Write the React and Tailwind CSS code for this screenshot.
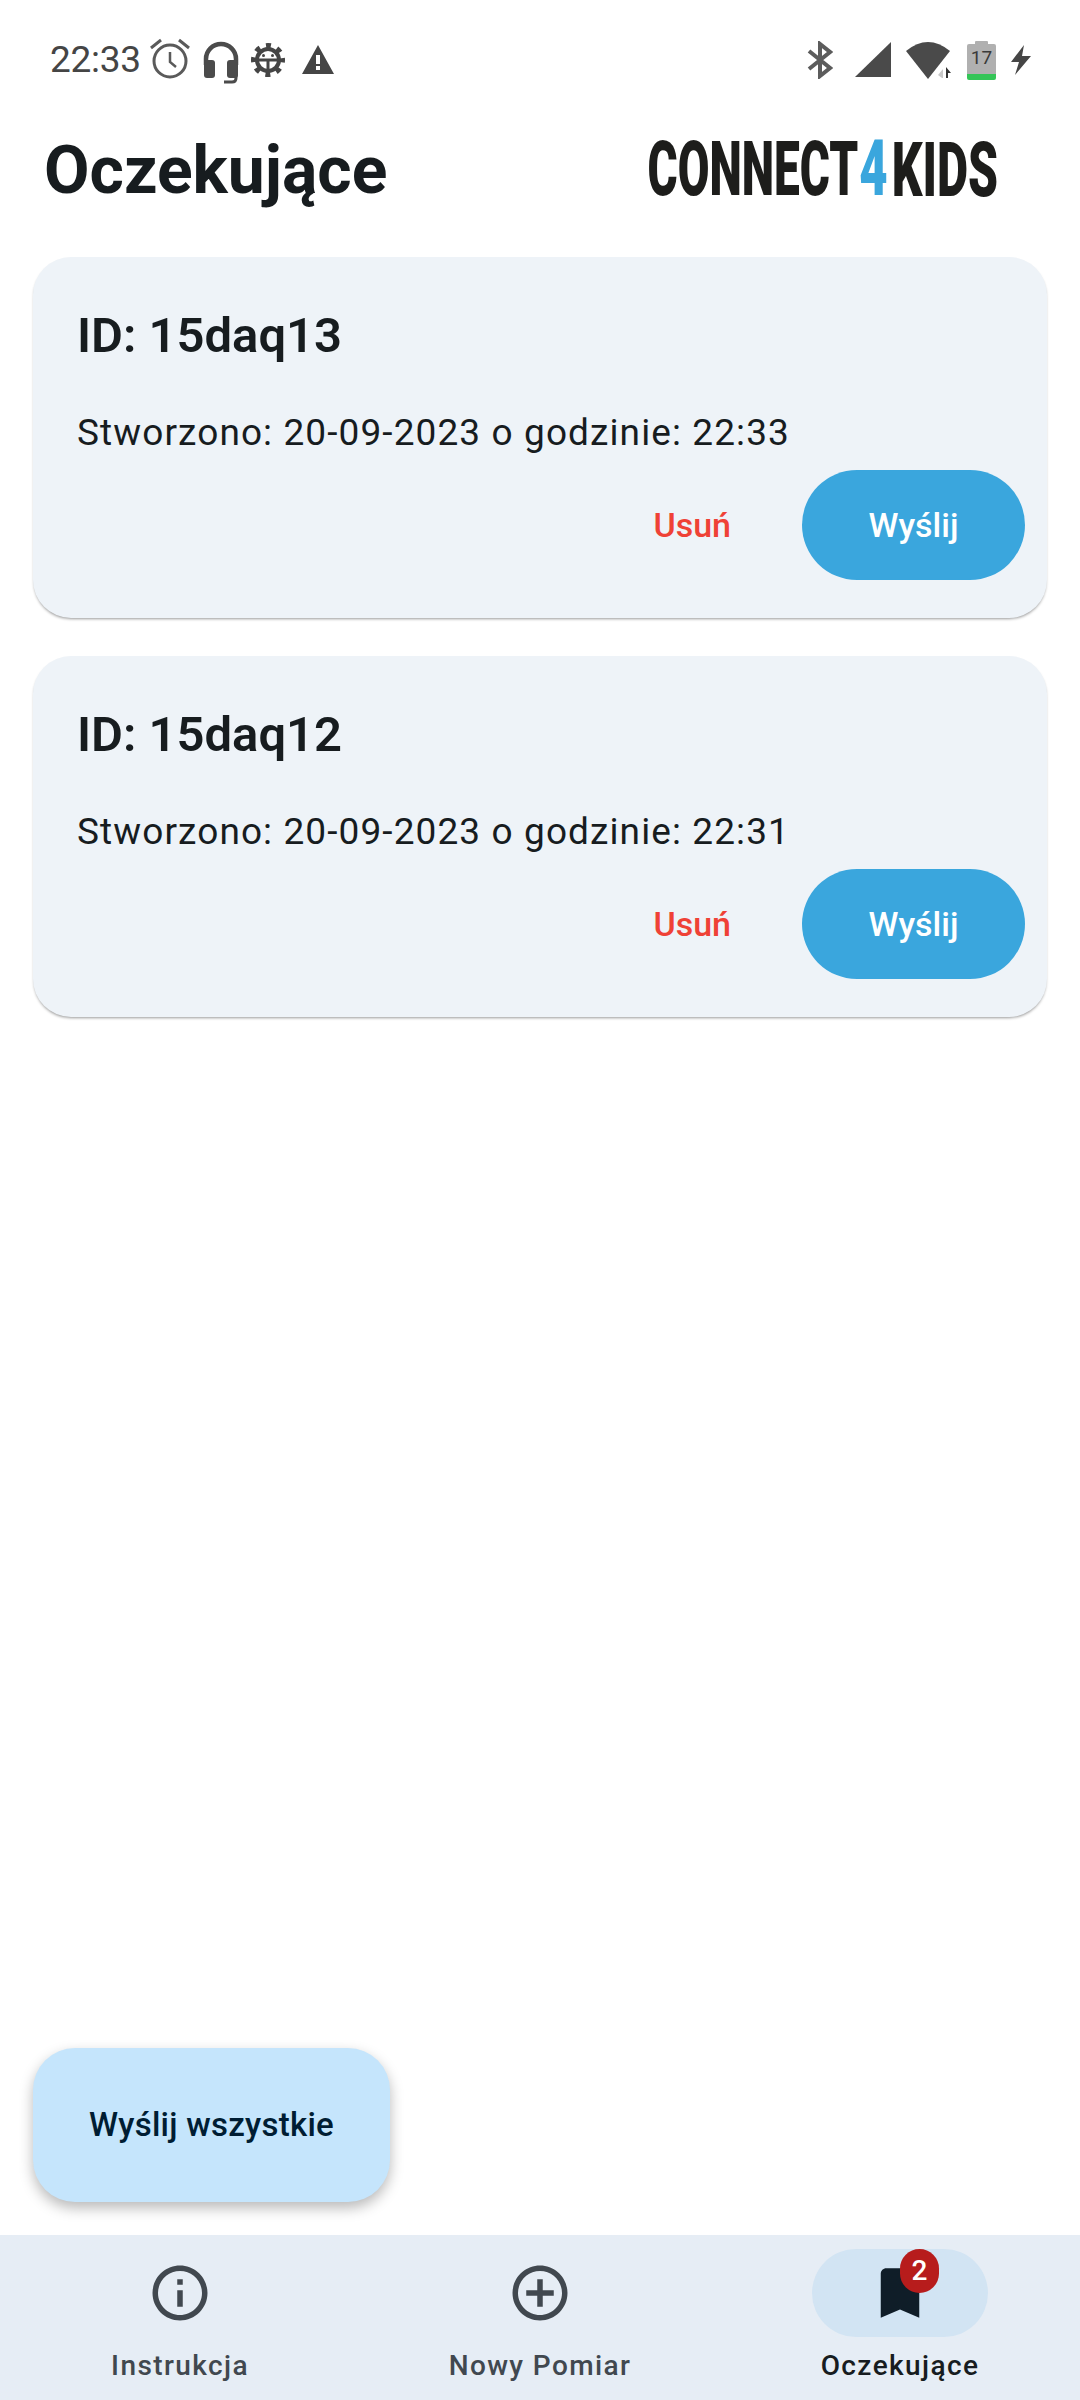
import React from 'react';

const cards = [
  { id: '15daq13', time: '22:33' },
  { id: '15daq12', time: '22:31' },
];

const StatusLeft = () => (
  <div className="flex items-center">
    <span className="text-[37px] leading-[40px] text-[#454545] tracking-[-0.3px] w-[99px] ml-[50px]">22:33</span>
    {/* alarm */}
    <svg width="42" height="42" viewBox="0 0 42 42" fill="none" stroke="#5a5a5a" strokeWidth="3" className="mb-[2px]">
      <circle cx="21" cy="23" r="16" />
      <path d="M21 14v10l6 5" strokeWidth="2.5" />
      <path d="M2 10 12 2M40 10 30 2" />
    </svg>
    {/* headset */}
    <svg width="38" height="44" viewBox="0 0 38 44" className="ml-[11px] mt-[6px]">
      <path d="M4 24V18a15 15 0 0 1 30 0v6" fill="none" stroke="#4b4b4b" strokeWidth="4.5" />
      <rect x="2" y="19" width="11" height="18" rx="3" fill="#4b4b4b" />
      <rect x="25" y="19" width="11" height="18" rx="3" fill="#4b4b4b" />
      <path d="M34 34v3q0 4-4 4h-8" fill="none" stroke="#4b4b4b" strokeWidth="3" />
    </svg>
    {/* system gear */}
    <svg width="34" height="34" viewBox="0 0 34 34" fill="none" stroke="#454545" className="ml-[11px]">
      <circle cx="17" cy="17" r="14.5" strokeWidth="5" strokeDasharray="5 6.39" strokeDashoffset="2.5" />
      <circle cx="17" cy="17" r="11" strokeWidth="4" />
      <path d="M6 17h22M17 17v11" strokeWidth="3" />
      <circle cx="12.5" cy="12.5" r="1.5" fill="#454545" stroke="none" />
      <circle cx="21.5" cy="12.5" r="1.5" fill="#454545" stroke="none" />
    </svg>
    {/* warning */}
    <svg width="32" height="30" viewBox="0 0 32 30" className="ml-[17px]">
      <path d="M16 0 32 29H0Z M14 10v9h4v-9Z M14 21v4h4v-4Z" fill="#454545" fillRule="evenodd" />
    </svg>
  </div>
);

const StatusRight = () => (
  <div className="flex items-center">
    {/* bluetooth */}
    <svg width="26" height="38" viewBox="0 0 26 38" fill="none" stroke="#5c5c5c" strokeWidth="4">
      <path d="M2 10 23 27 13 35V3L23 11 2 28" />
    </svg>
    {/* signal */}
    <svg width="36" height="36" viewBox="0 0 36 36" className="ml-[22px]">
      <path d="M36 0V35H0Z" fill="#4a4a4a" />
    </svg>
    {/* wifi */}
    <svg width="46" height="38" viewBox="0 0 46 38" className="ml-[15px]">
      <path d="M0 10Q22-8 44 10L22 38Z" fill="#4a4a4a" />
      <path d="M32 34l5-6v9h-1Z" fill="#c9c9c9" />
      <path d="M40 26l5 6-3 0v5h-2Z" fill="#333" />
    </svg>
    {/* battery */}
    <div className="relative w-[29px] h-[39px] ml-[15px] flex flex-col">
      <div className="h-[3px] w-[13px] mx-auto bg-[#b0b0b0] rounded-t-[1px]" />
      <div className="h-[30px] bg-[#b0b0b0] rounded-t-[2px] flex items-center justify-center text-[19px] text-[#3a3a3a]">17</div>
      <div className="h-[6px] bg-[#34c557] rounded-b-[2px]" />
    </div>
    {/* charging */}
    <svg width="20" height="30" viewBox="0 0 20 30" className="ml-[15px] mr-[49px]">
      <path d="M13 0 0 17H8L4 30 20 11H11Z" fill="#454545" />
    </svg>
  </div>
);

// logo lettering is condensed, so small type stretched upwards
const Logo = () => (
  <div className="flex items-center h-[55px] font-black leading-[55px] mr-[82px]">
    <span className="text-[46px] scale-y-[1.67] text-[#1d1d1b]">CONNECT</span>
    <span className="text-[49px] scale-y-[1.57] text-[#3aa6dd] ml-[1px]">4</span>
    <span className="text-[48px] scale-y-[1.6] text-[#1d1d1b] ml-[4px]">KIDS</span>
  </div>
);

const Card = ({ id, time }) => (
  <div className="h-[361px] rounded-[38px] bg-[#eef3f8] shadow-[0_2px_3px_-1px_rgba(0,0,0,0.4)] pt-[51px] pl-[44px] pr-[22px]">
    <h2 className="text-[49px] leading-[56px] font-semibold text-[#171c1f]">ID: {id}</h2>
    <p className="mt-[44px] text-[37px] leading-[50px] tracking-[1.1px] text-[#171c1f]">
      Stworzono: 20-09-2023 o godzinie: {time}
    </p>
    <div className="mt-[12px] flex items-center justify-end">
      <button className="text-[34px] font-medium text-[#ef4136] mr-[71px]">Usuń</button>
      <button className="w-[223px] h-[110px] rounded-full bg-[#3aa6dd] text-[34px] font-medium text-white">Wyślij</button>
    </div>
  </div>
);

const NavItem = ({ label, active, d, badge }) => (
  <div className="flex-1 flex flex-col items-center pt-[14px]">
    <div className={`relative w-[176px] h-[88px] rounded-full flex items-center justify-center ${active ? 'bg-[#d2e4f3]' : ''}`}>
      <svg width="66" height="66" viewBox="0 0 24 24" fill={active ? '#0f1d28' : '#41484f'}>
        <path d={d} />
      </svg>
      {badge && (
        <span className="absolute top-0 left-[88px] w-[39px] h-[44px] rounded-full bg-[#b71c1c] text-white text-[28px] font-medium flex items-center justify-center">
          {badge}
        </span>
      )}
    </div>
    <span className={`mt-[11px] text-[28px] leading-[36px] font-medium tracking-[1.4px] ${active ? 'text-[#171c20]' : 'text-[#41484f]'}`}>
      {label}
    </span>
  </div>
);

export default function App() {
  return (
    <div className="h-[2400px] w-[1080px] flex flex-col bg-white font-['Roboto',sans-serif] overflow-hidden">
      <div className="h-[120px] flex items-center justify-between shrink-0">
        <StatusLeft />
        <StatusRight />
      </div>
      <div className="h-[137px] flex items-start justify-between shrink-0">
        <h1 className="ml-[44px] mt-[11px] text-[66px] leading-[80px] font-bold text-[#171c1f]">Oczekujące</h1>
        <div className="mt-[22px]"><Logo /></div>
      </div>
      <div className="px-[33px] flex flex-col gap-[38px]">
        {cards.map((c) => <Card key={c.id} {...c} />)}
      </div>
      <div className="mt-auto ml-[33px] mb-[33px] w-[357px] h-[154px] rounded-[42px] bg-[#c5e5fc] shadow-[0_6px_14px_rgba(0,0,0,0.28)] flex items-center justify-center text-[33px] font-medium tracking-[0.25px] text-[#001d33]">
        Wyślij wszystkie
      </div>
      <div className="h-[165px] bg-[#e6edf5] flex shrink-0">
        <NavItem label="Instrukcja" d="M11 7h2v2h-2zm0 4h2v6h-2zm1-9C6.48 2 2 6.48 2 12s4.48 10 10 10 10-4.48 10-10S17.52 2 12 2zm0 18c-4.41 0-8-3.59-8-8s3.59-8 8-8 8 3.59 8 8-3.59 8-8 8z" />
        <NavItem label="Nowy Pomiar" d="M13 7h-2v4H7v2h4v4h2v-4h4v-2h-4V7zm-1-5C6.48 2 2 6.48 2 12s4.48 10 10 10 10-4.48 10-10S17.52 2 12 2zm0 18c-4.41 0-8-3.59-8-8s3.59-8 8-8 8 3.59 8 8-3.59 8-8 8z" />
        <NavItem label="Oczekujące" active badge="2" d="M17 3H7c-1.1 0-2 .9-2 2v16l7-3 7 3V5c0-1.1-.9-2-2-2z" />
      </div>
    </div>
  );
}
